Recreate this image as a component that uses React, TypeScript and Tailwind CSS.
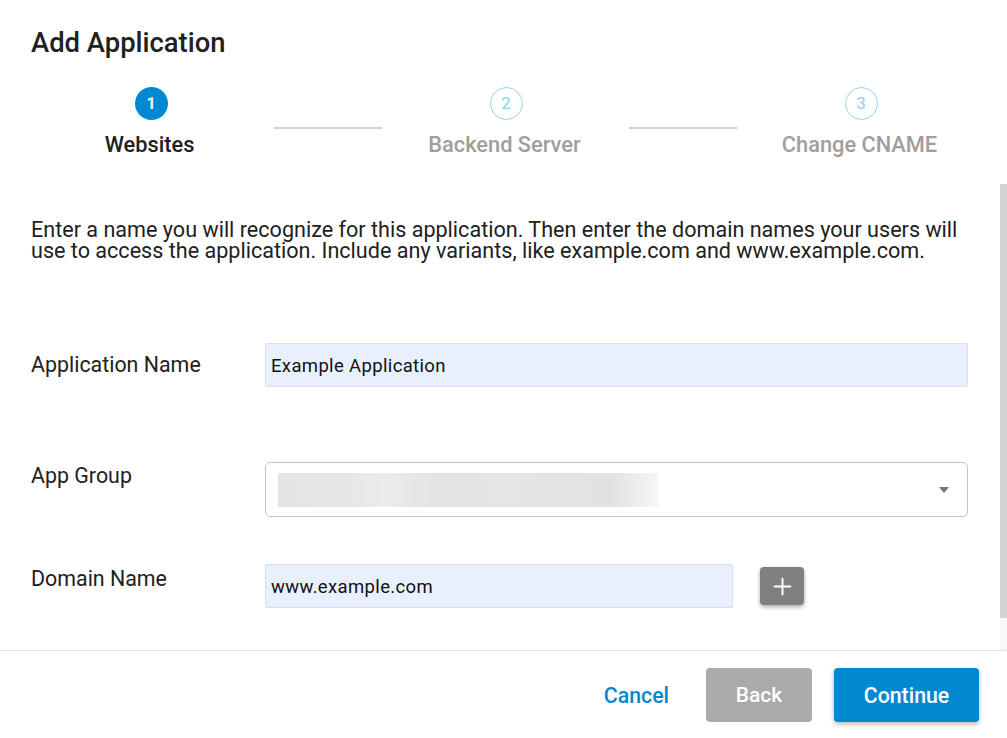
import { Plus } from 'lucide-react';

const steps = [
  { n: 1, label: 'Websites', active: true },
  { n: 2, label: 'Backend Server', active: false },
  { n: 3, label: 'Change CNAME', active: false },
];

function Step({ n, label, active }: { n: number; label: string; active: boolean }) {
  return (
    <div className="flex w-[248px] shrink-0 flex-col items-center">
      <div
        className={
          active
            ? 'flex h-[33px] w-[33px] items-center justify-center rounded-full bg-[#0088d1] text-[16px] font-bold text-white'
            : 'flex h-[33px] w-[33px] items-center justify-center rounded-full border border-[#92d0f0] text-[17px] text-[#92d0f0]'
        }
      >
        {n}
      </div>
      <div className={active ? 'mt-[10px] mr-[3px] text-[21.8px] leading-[30px] font-medium text-[#212121]' : 'mt-[10px] mr-[3px] text-[21.8px] leading-[30px] font-medium text-[#9e9e9e]'}>
        {label}
      </div>
    </div>
  );
}

export default function App() {
  return (
    <div className="relative flex h-[738px] w-[1007px] flex-col overflow-hidden bg-white font-['Roboto',sans-serif] text-[#212121]">
      <div className="absolute top-[184px] right-0 h-[466px] w-[7px] bg-[#f9f9f9]">
        <div className="h-[434px] w-full bg-[#d4d4d4]" />
      </div>

      <div className="flex-1 pl-[31px] pr-[39px]">
        <h1 className="pt-[25px] text-[27.4px] leading-[36px] font-medium">Add Application</h1>

        <div className="mt-[26px] -mr-[20px] flex items-start">
          <div className="-ml-[4px]">
            <Step {...steps[0]} />
          </div>
          <div className="mt-[40px] -ml-[1px] h-[2px] w-[108px] shrink-0 bg-[#d0d0d0]" />
          <Step {...steps[1]} />
          <div className="mt-[40px] -ml-[1px] h-[2px] w-[108px] shrink-0 bg-[#d0d0d0]" />
          <Step {...steps[2]} />
        </div>

        <p className="mt-[59px] w-[940px] text-[21.58px] leading-[21px]">
          Enter a name you will recognize for this application. Then enter the domain names your users will use to access the application. Include any variants, like example.com and www.example.com.
        </p>

        <div className="mt-[82px] flex items-start">
          <div className="w-[234px] shrink-0 text-[21.4px] leading-[44px]">Application Name</div>
          <div className="flex h-[44px] w-[703px] items-center rounded-[2px] border border-[#dcdfe6] bg-[#e8f0fe] px-[5px] pt-[4px] text-[18.5px] tracking-[0.35px] text-[#111]">
            Example Application
          </div>
        </div>

        <div className="mt-[75px] flex items-start">
          <div className="w-[234px] shrink-0 text-[21.4px] leading-[28px]">App Group</div>
          <div className="flex h-[55px] w-[703px] items-center justify-between rounded-[5px] border border-[#c4c4c4] pl-[12px] pr-[18px]">
            <div className="h-[34px] w-[380px] bg-[linear-gradient(90deg,#e4e4e4_0%,#e6e6e6_18%,#ececec_28%,#e3e3e3_42%,#e5e5e5_60%,#e2e2e2_88%,#f6f6f6_100%)]" />
            <div className="h-0 w-0 border-x-[5px] border-t-[6px] border-x-transparent border-t-[#757575]" />
          </div>
        </div>

        <div className="mt-[47px] flex items-start">
          <div className="w-[234px] shrink-0 text-[21.4px] leading-[30px]">Domain Name</div>
          <div className="flex h-[44px] w-[468px] items-center rounded-[2px] border border-[#dcdfe6] bg-[#e8f0fe] px-[5px] pt-[3px] text-[18.5px] tracking-[0.35px] text-[#111]">
            www.example.com
          </div>
          <button className="mt-[3px] ml-[27px] flex h-[38px] w-[44px] items-center justify-center rounded-[4px] bg-[#808080] text-white shadow-[0_2px_4px_rgba(0,0,0,0.35)]">
            <Plus size={27} strokeWidth={1.75} />
          </button>
        </div>
      </div>

      <div className="flex h-[88px] items-start justify-end border-t border-[#e0e0e0] pt-[17px] pr-[28px]">
        <button className="mt-[14px] mr-[37px] text-[21.3px] leading-[28px] font-medium text-[#0088d1]">Cancel</button>
        <button className="mr-[22px] h-[54px] w-[106px] rounded-[4px] bg-[#aaaaaa] pt-[2px] text-[21px] font-medium text-white">Back</button>
        <button className="h-[54px] w-[145px] rounded-[4px] bg-[#0088d1] pt-[2px] text-[21.3px] font-medium text-white shadow-[0_2px_5px_rgba(0,0,0,0.3)]">Continue</button>
      </div>
    </div>
  );
}
